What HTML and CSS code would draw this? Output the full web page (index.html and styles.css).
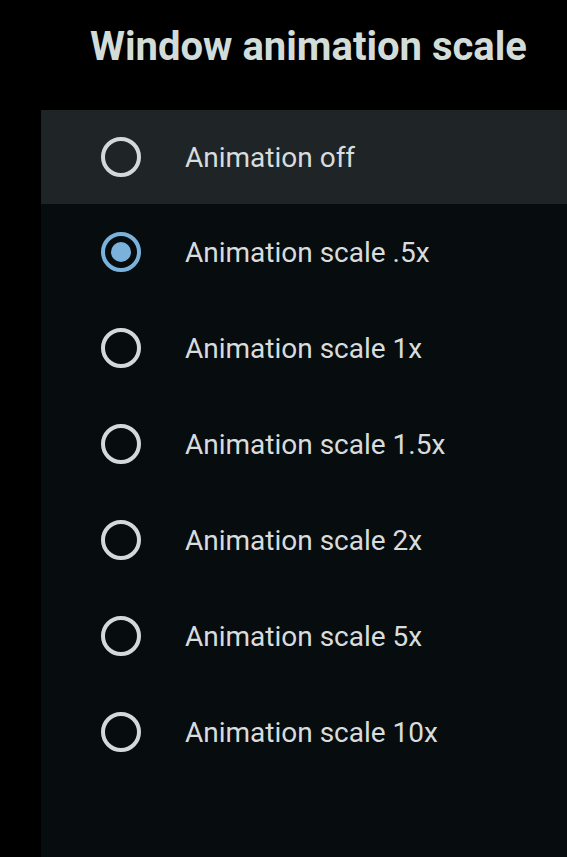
FILE: index.html
```html
<!DOCTYPE html>
<html>
<head>
<meta charset="utf-8">
<link rel="stylesheet" href="styles.css">
</head>
<body>
<div class="screen">
  <h1 class="title">Window animation scale</h1>
  <div class="panel">
    <div class="row active"><span class="radio"></span><span class="label">Animation off</span></div>
    <div class="row"><span class="radio checked"></span><span class="label">Animation scale .5x</span></div>
    <div class="row"><span class="radio"></span><span class="label">Animation scale 1x</span></div>
    <div class="row"><span class="radio"></span><span class="label">Animation scale 1.5x</span></div>
    <div class="row"><span class="radio"></span><span class="label">Animation scale 2x</span></div>
    <div class="row"><span class="radio"></span><span class="label">Animation scale 5x</span></div>
    <div class="row"><span class="radio"></span><span class="label">Animation scale 10x</span></div>
  </div>
</div>
</body>
</html>
```
FILE: styles.css
```css
html, body {
  margin: 0;
  padding: 0;
  background: #000;
  height: 100%;
  overflow: hidden;
}
.screen {
  width: 567px;
  height: 857px;
  display: flex;
  flex-direction: column;
  font-family: Roboto, "Liberation Sans", sans-serif;
}
.title {
  margin: 0;
  padding: 23px 0 0 90px;
  height: 110px;
  flex: none;
  box-sizing: border-box;
  font-size: 40px;
  font-weight: 700;
  color: #d2dcd8;
  line-height: 48px;
}
.panel {
  margin-left: 41px;
  flex: 1;
  background: #070c0f;
}
.row {
  height: 96px;
  display: flex;
  align-items: center;
}
.row.active {
  background: #1f2527;
  height: 94px;
}
.radio {
  width: 40px;
  height: 40px;
  border: 4px solid #d4d8d8;
  border-radius: 50%;
  margin-left: 60px;
  box-sizing: border-box;
  flex: none;
  position: relative;
}
.radio.checked {
  border-color: #7ab2dc;
}
.radio.checked::after {
  content: "";
  position: absolute;
  left: 6px;
  top: 6px;
  width: 20px;
  height: 20px;
  border-radius: 50%;
  background: #7ab2dc;
}
.label {
  margin-left: 44px;
  font-size: 28px;
  color: #d8dcdc;
}
```
